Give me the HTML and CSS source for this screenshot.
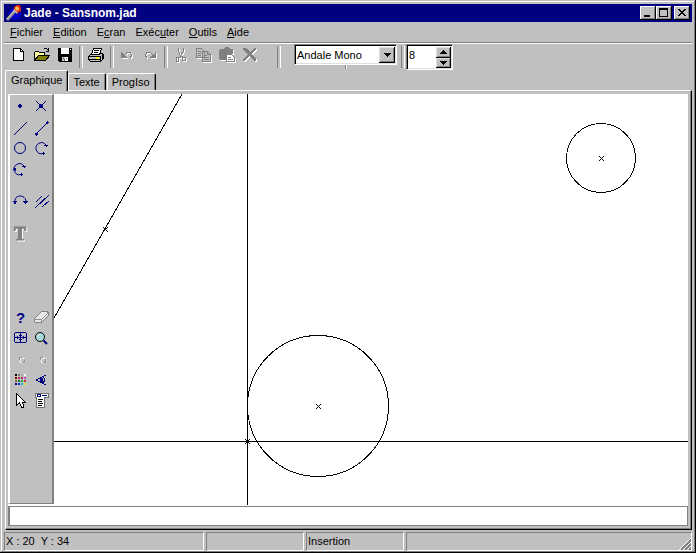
FILE: index.html
```html
<!DOCTYPE html>
<html lang="fr">
<head>
<meta charset="utf-8">
<title>Jade - Sansnom.jad</title>
<link rel="stylesheet" href="styles.css">
</head>
<body>
<div class="window">
  <header class="titlebar">
    <svg class="icon16 smooth" viewBox="0 0 16 16" aria-hidden="true">
      <circle cx="9" cy="9" r="6" fill="#0000c8"/>
      <path d="M1 15L9 6" stroke="#909090" stroke-width="3"/>
      <path d="M1 14L8 6" stroke="#d8d8d8" stroke-width="1"/>
      <path d="M7 5L11 9L13 6L9 3Z" fill="#c0c0c0"/>
      <path d="M8 2L11 0H14L15 3V6L12 8L8 4Z" fill="#e02800"/>
      <path d="M9 3L11 1L13 3L13 5L11 6L9 4Z" fill="#ffb060"/>
    </svg>
    <h1 class="title">Jade - Sansnom.jad</h1>
    <button class="winbtn" aria-label="Réduire"><svg viewBox="0 0 12 10"><path d="M2 7H8V9H2Z"/></svg></button>
    <button class="winbtn" aria-label="Agrandir"><svg viewBox="0 0 12 10"><path fill-rule="evenodd" d="M1 0H10V9H1ZM2 2V8H9V2Z"/></svg></button>
    <button class="winbtn winbtn-close" aria-label="Fermer"><svg viewBox="0 0 12 10"><path d="M2 1h2v1h1v1h2v-1h1v-1h2v1h-1v1h-1v1h-1v1h1v1h1v1h1v1h-2v-1h-1v-1h-2v1h-1v1h-2v-1h1v-1h1v-1h1v-1h-1v-1h-1v-1h-1z"/></svg></button>
  </header>

  <nav class="menubar">
    <a href="#"><u>F</u>ichier</a>
    <a href="#"><u>E</u>dition</a>
    <a href="#">E<u>c</u>ran</a>
    <a href="#">Exéc<u>u</u>ter</a>
    <a href="#"><u>O</u>utils</a>
    <a href="#"><u>A</u>ide</a>
  </nav>

  <div class="toolbar">
    <button class="tool" aria-label="Nouveau"><svg class="icon16" viewBox="0 0 16 16"><path d="M2.500 1.500H9.500L12.500 4.500V13.500H2.500Z" fill="#fff" stroke="#000"/><path d="M9.500 1.500V4.500H12.500" fill="none" stroke="#000"/></svg></button>
    <button class="tool" aria-label="Ouvrir"><svg class="icon16" viewBox="0 0 16 16"><path d="M0.500 13.500V5.500L1.500 4.500H4.500L5.500 5.500H10.500V8.500" fill="#ffff9c" stroke="#000"/><path d="M0.500 13.500L4.500 8.500H15.500L11.500 13.500Z" fill="#808000" stroke="#000"/><path d="M9.500 2.500L10.500 1.500H12.500L14.500 3.500M14.500 1V4M12 4.500H15" fill="none" stroke="#000"/></svg></button>
    <button class="tool" aria-label="Enregistrer"><svg class="icon16" viewBox="0 0 16 16"><path d="M1 1H15V15H2L1 14Z"/><path d="M4 1H12V7H4Z" fill="#fff"/><path d="M5 10H11V14H5Z" fill="#c0c0c0"/><path d="M8 10H11V14H8ZM13 2H14V3H13Z" fill="#fff"/><path d="M6 11H7V12H6ZM7 12H8V14H7ZM9 11H10V12H9Z" fill="#606060"/></svg></button>
    <span class="sep"></span>
    <button class="tool" aria-label="Imprimer"><svg class="icon16" viewBox="0 0 16 16"><path d="M1.500 8.500L4.500 6.500H14.500L15.500 8.500V11.500L12.500 14.500H2.500L0.500 12.500V9.500Z" fill="#c0c0c0" stroke="#000"/><path d="M3.500 7.500L5.500 1.500H13.500L11.500 7.500Z" fill="#fff" stroke="#000"/><path d="M6 3.500H11M6 5.500H10M1 9.500H12M1 12.500H12M12.500 9V14M14.500 8V12" stroke="#000"/><path d="M8 10H11V12H8Z" fill="#ffff00"/></svg></button>
    <span class="sep"></span>
    <button class="tool" aria-label="Annuler" disabled><svg class="icon16 embossed" viewBox="0 0 16 16"><path d="M2 5V11H8V10L6 9V8L8 6H11V7H12V9H11V11H12V10H13V7H12V5H7V6L5 8L3 6V5Z"/></svg></button>
    <button class="tool" aria-label="Rétablir" disabled><svg class="icon16 embossed" viewBox="0 0 16 16"><path d="M14 5V11H8V10L10 9V8L8 6H5V7H4V9H5V11H4V10H3V7H4V5H9V6L11 8L13 6V5Z"/></svg></button>
    <span class="sep"></span>
    <button class="tool" aria-label="Couper" disabled><svg class="icon16 embossed" viewBox="0 0 16 16"><path d="M5.500 1V4L7.500 9M10.500 1V4L7.500 9V10L5.500 11M8.500 9L10.500 11M3.500 10.500H5.500V14.500H3.500ZM9.500 10.500H12.500V13.500H9.500Z" class="line"/></svg></button>
    <button class="tool" aria-label="Copier" disabled><svg class="icon16 embossed" viewBox="0 0 16 16"><path d="M0.500 1.500H5.500L8.500 4.500V10.500H0.500ZM6.500 4.500H11.500L14.500 7.500V14.500H6.500Z" fill="#c0c0c0" stroke="#808080"/><path d="M2 4.500H5M2 6.500H5M2 8.500H5M8 8.500H11M8 10.500H13M8 12.500H13M11.500 5V7.500H14" class="line"/></svg></button>
    <button class="tool" aria-label="Coller" disabled><svg class="icon16 embossed" viewBox="0 0 16 16"><path d="M1 2H4L6 0H9L11 2H14V7H8V13H1L0 12V3Z"/><path d="M7.500 7.500H12.500L15.500 10.500V14.500H7.500Z" fill="#fff" stroke="#808080"/><path d="M9 10.500H12M9 12.500H14" class="line"/></svg></button>
    <button class="tool" aria-label="Supprimer" disabled><svg class="icon16 embossed" viewBox="0 0 16 16"><path d="M1 1H4L8 5L13 1H14V2L9 7L14 12V14H13L7 9L3 14H1V12L6 7L1 3Z"/></svg></button>
    <span class="sep sep-far"></span>
    <div class="combo">
      <select aria-label="Police"><option>Andale Mono</option></select>
      <span class="combo-arrow"><svg viewBox="0 0 7 4"><path d="M0 0H7V1H6V2H5V3H4V4H3V3H2V2H1V1H0Z"/></svg></span>
    </div>
    <span class="sep"></span>
    <div class="spin">
      <input type="number" value="8" aria-label="Taille">
      <div class="spin-buttons">
        <button aria-label="Augmenter"><svg viewBox="0 0 7 4"><path d="M0 4H7V3H6V2H5V1H4V0H3V1H2V2H1V3H0Z"/></svg></button>
        <button aria-label="Diminuer"><svg viewBox="0 0 7 4"><path d="M0 0H7V1H6V2H5V3H4V4H3V3H2V2H1V1H0Z"/></svg></button>
      </div>
    </div>
  </div>

  <div class="tabs" role="tablist">
    <button class="tab tab-active" role="tab" aria-selected="true">Graphique</button>
    <button class="tab" role="tab">Texte</button>
    <button class="tab" role="tab">ProgIso</button>
  </div>

  <main class="panel">
    <div class="work">
      <aside class="palette">
        <div class="group">
          <button aria-label="Point"><svg viewBox="0 0 17 17"><path d="M7 6h2v1h1v2h-1v1h-2v-1h-1v-2h1z" class="solid"/></svg></button>
          <button aria-label="Intersection"><svg viewBox="0 0 17 17"><path d="M3 3L13 13M13 3L3 13" class="navy"/><path d="M6 6h4v4h-4z" class="solid"/></svg></button>
          <button aria-label="Droite"><svg viewBox="0 0 17 17"><path d="M2 16L15 3" class="navy"/></svg></button>
          <button aria-label="Segment"><svg viewBox="0 0 17 17"><path d="M3 15L15 3" class="navy"/><path d="M2 14h2v-1h1v3h-1v1h-1v-1h-1zM13 3h1v-1h1v1h1v1h-1v1h-1v-1h-1z" class="solid"/></svg></button>
          <button aria-label="Cercle"><svg class="smooth" viewBox="0 0 17 17"><circle cx="8" cy="8" r="5.500" class="navy"/></svg></button>
          <button aria-label="Arc"><svg class="smooth" viewBox="0 0 17 17"><path d="M13 5A5.500 5.500 0 1 0 10 13.500" class="navy"/><path d="M11 5h4v1h-1v1h-1v-1h-2zM10 12h1v1h1v1h-1v1h-1z" class="solid"/></svg></button>
          <button aria-label="Arc par le centre"><svg class="smooth" viewBox="0 0 17 17"><path d="M12 5A5.500 5.500 0 1 0 9 13.500" class="navy"/><path d="M10 5h4v1h-1v1h-1v-1h-2zM9 12h1v1h1v1h-1v1h-1zM1 8h1v-1h2v3h-1v-1h-2z" class="solid"/></svg></button>
        </div>
        <div class="group">
          <button aria-label="Raccord"><svg class="smooth" viewBox="0 0 17 17"><path d="M3 9C2 1 14 1 14 9" class="navy"/><path d="M1 8h4v1h-1v2h-2v-2h-1zM11 8h5v1h-1v1h-1v1h-1v-1h-1v-1h-1z" class="solid"/></svg></button>
          <button aria-label="Parallèle"><svg viewBox="0 0 17 17"><path d="M2 15L16 2M3 9L9 3M9 14L16 8" class="navy"/></svg></button>
        </div>
        <div class="group">
          <button aria-label="Texte" disabled><svg class="smooth" viewBox="0 0 17 17"><text x="2" y="15" class="letter-t">T</text></svg></button>
        </div>
        <div class="group group-low">
          <button aria-label="Aide"><svg viewBox="0 0 17 17"><text x="4" y="14" class="letter-q">?</text></svg></button>
          <button aria-label="Gomme"><svg viewBox="0 0 17 17"><path d="M1.500 9.500L8.500 2.500H14.500L15.500 4.500V6.500L8.500 13.500H2.500L1.500 12.500Z" fill="#e8e8e8" stroke="#808080"/><path d="M2 10.500H8.500L15 4M8.500 11V13" fill="none" stroke="#909090"/></svg></button>
          <button aria-label="Cadrer"><svg viewBox="0 0 17 17"><path d="M3.500 2.500H13.500L14.500 3.500V11.500L13.500 12.500H3.500L2.500 11.500V3.500ZM8.500 3V12M3 7.500H14M5.500 6V9M11.500 6V9M7 5.500H10M7 9.500H10" class="navy"/></svg></button>
          <button aria-label="Zoom"><svg class="smooth" viewBox="0 0 17 17"><circle cx="7" cy="7" r="4.500" fill="#a8d8d8" stroke="#000"/><path d="M4.500 6.500L6.500 4.500" stroke="#fff"/><path d="M10.500 10.500L14 14" stroke="#000080" stroke-width="2"/></svg></button>
          <button aria-label="Précédent" disabled><svg class="smooth" viewBox="0 0 17 17"><circle cx="10.500" cy="9.500" r="2.500" fill="none" stroke="#fff"/><path d="M7.500 9V6.500H10M12.500 8V11.500H10" fill="none" stroke="#909090"/></svg></button>
          <button aria-label="Suivant" disabled><svg class="smooth" viewBox="0 0 17 17"><circle cx="10.500" cy="9.500" r="2.500" fill="none" stroke="#fff"/><path d="M7.500 9V6.500H10M12.500 8V11.500H10" fill="none" stroke="#909090"/></svg></button>
          <button aria-label="Couleurs"><svg viewBox="0 0 17 17">
            <path d="M3 2h2v2h-2z" fill="#000"/><path d="M6 2h2v2h-2z" fill="#808080"/><path d="M9 2h2v2h-2z" fill="#b0a8b0"/><path d="M12 2h2v2h-2z" fill="#fff"/>
            <path d="M3 5h2v2h-2z" fill="#800000"/><path d="M6 5h2v2h-2z" fill="#c02040"/><path d="M9 5h2v2h-2z" fill="#a03070"/><path d="M12 5h2v2h-2z" fill="#e040c0"/>
            <path d="M3 8h2v2h-2z" fill="#806020"/><path d="M6 8h2v2h-2z" fill="#008040"/><path d="M9 8h2v2h-2z" fill="#20a040"/><path d="M12 8h2v2h-2z" fill="#c03030"/>
            <path d="M3 11h2v2h-2z" fill="#000080"/><path d="M6 11h2v2h-2z" fill="#0020e0"/><path d="M9 11h2v2h-2z" fill="#20c0c0"/><path d="M12 11h2v2h-2z" fill="#f0e040"/></svg></button>
          <button aria-label="Voir"><svg viewBox="0 0 17 17"><path d="M13 3L3 8L13 13M10 5C12 7 12 9 10 11" class="navy"/><path d="M7 6H10V11H7Z" class="solid"/></svg></button>
          <button aria-label="Sélection"><svg viewBox="0 0 17 17"><path d="M4.500 0.500V12.500L7.500 9.500L9.500 14.500H11.500V12.500L10.500 9.500H13.500Z" fill="#fff" stroke="#000"/></svg></button>
          <button aria-label="Propriétés"><svg viewBox="0 0 17 17"><path d="M2.500 0.500H15.500V4.500H11.500V14.500H3.500V4.500H2.500Z" fill="#fff" stroke="#707070"/><path d="M4.500 1.500H7.500V3.500H4.500ZM9 2.500H14" fill="none" stroke="#000080"/><path d="M5 6.500H10M5 8.500H9M5 10.500H10M5 12.500H9" stroke="#000"/></svg></button>
        </div>
      </aside>
      <svg class="drawing" role="img" aria-label="Dessin">
        <defs>
          <g id="mark"><path d="M-2 -2h1v1h-1zM-1 -1h1v1h-1zM0 0h1v1h-1zM1 1h1v1h-1zM2 2h1v1h-1zM2 -2h1v1h-1zM1 -1h1v1h-1zM-1 1h1v1h-1zM-2 2h1v1h-1z" fill="#000" stroke="none"/></g>
        </defs>
        <line x1="193.500" y1="0" x2="193.500" y2="100%"/>
        <line x1="0" y1="347.500" x2="100%" y2="347.500"/>
        <line x1="128" y1="0" x2="0" y2="224"/>
        <circle cx="264" cy="312" r="70.500"/>
        <circle cx="547" cy="64" r="34.500"/>
        <use href="#mark" x="51" y="135"/>
        <use href="#mark" x="547" y="64"/>
        <use href="#mark" x="264" y="312"/>
        <use href="#mark" x="193" y="347"/>
      </svg>
    </div>
    <input class="command" type="text" aria-label="Commande">
  </main>

  <footer class="status">
    <span>X : 20&nbsp; Y : 34</span>
    <span></span>
    <span>Insertion</span>
    <span class="status-last"><svg class="grip" viewBox="0 0 12 12" aria-hidden="true"><path d="M0 12L12 0M4 12L12 4M8 12L12 8" stroke="#fff" fill="none"/><path d="M2 12L12 2M6 12L12 6M10 12L12 10" stroke="#808080" stroke-width="2" fill="none"/></svg></span>
  </footer>
</div>
</body>
</html>
```

FILE: styles.css
```css
* {
  box-sizing: border-box;
}

body {
  margin: 0;
  background: #c0c0c0;
  color: #000;
  font: 11px/13px "Liberation Sans", Arial, sans-serif;
}

button,
input,
select {
  margin: 0;
  padding: 0;
  border: 0;
  border-radius: 0;
  background: none;
  color: inherit;
  font: inherit;
}

svg {
  display: block;
  shape-rendering: crispEdges;
}

.smooth {
  shape-rendering: auto;
}

.window {
  display: flex;
  flex-direction: column;
  height: 100vh;
  padding: 4px 4px 3px;
  box-shadow: inset -1px -1px #000, inset 1px 1px #c0c0c0, inset -2px -2px #808080, inset 2px 2px #fff;
}

.icon16 {
  width: 16px;
  height: 16px;
}

/* Title bar */
.titlebar {
  display: flex;
  align-items: center;
  height: 18px;
  padding: 0 2px;
  background: #000080;
}

.title {
  flex: 1;
  margin: 0 0 0 2px;
  color: #fff;
  font-size: 12px;
  line-height: 18px;
  font-weight: bold;
}

.winbtn {
  display: grid;
  place-items: center;
  width: 16px;
  height: 14px;
  background: #c0c0c0;
  box-shadow: inset -1px -1px #000, inset 1px 1px #fff, inset -2px -2px #808080;
}

.winbtn svg {
  width: 12px;
  height: 10px;
}

.winbtn-close {
  margin-left: 2px;
}

/* Menu */
.menubar {
  display: flex;
  gap: 10px;
  height: 22px;
  padding: 4px 6px 0;
  border-bottom: 1px solid #fff;
  box-shadow: inset 0 -1px #808080;
}

.menubar a {
  color: inherit;
  text-decoration: none;
}

/* Toolbar */
.toolbar {
  display: flex;
  height: 26px;
  padding-left: 3px;
}

.tool {
  display: grid;
  place-items: center;
  width: 23px;
  height: 22px;
}

.embossed {
  fill: #808080;
  filter: drop-shadow(1px 1px 0 #fff);
}

.line {
  fill: none;
  stroke: #808080;
}

.sep {
  width: 8px;
  height: 22px;
  margin-top: 2px;
}

.sep::before {
  content: "";
  display: block;
  width: 2px;
  height: 100%;
  margin-left: 3px;
  border-left: 1px solid #808080;
  border-right: 1px solid #fff;
}

.sep-far {
  margin: 2px 12px 0 13px;
}

.combo,
.spin {
  display: flex;
  background: #fff;
  border: 1px solid;
  border-color: #808080 #fff #fff #808080;
  box-shadow: inset 1px 1px #000, inset -1px -1px #dfdfdf;
  padding: 2px 1px 1px;
}

.combo {
  position: relative;
  width: 103px;
  height: 21px;
}

.combo::after {
  content: "";
  position: absolute;
  top: 20px;
  left: 50px;
  height: 4px;
  border-left: 1px solid #808080;
  border-right: 1px solid #fff;
}

.combo select {
  appearance: none;
  flex: 1;
  min-width: 0;
  padding-left: 1px;
  outline: none;
}

.combo-arrow {
  display: grid;
  place-items: center;
  width: 16px;
  pointer-events: none;
}

.combo-arrow,
.spin button {
  background: #c0c0c0;
  box-shadow: inset -1px -1px #000, inset 1px 1px #dfdfdf, inset -2px -2px #808080;
}

.combo-arrow svg,
.spin svg {
  width: 7px;
  height: 4px;
}

.spin {
  width: 47px;
  height: 26px;
}

.combo + .sep {
  margin-left: 1px;
}

.spin input {
  appearance: textfield;
  flex: 1;
  min-width: 0;
  height: 16px;
  padding-left: 1px;
  outline: none;
}

.spin input::-webkit-inner-spin-button {
  appearance: none;
}

.spin-buttons {
  display: grid;
  width: 15px;
}

.spin button {
  display: grid;
  place-items: center;
}

/* Tabs */
.tabs {
  display: flex;
  align-items: flex-end;
  height: 20px;
  padding-left: 1px;
}

.tab {
  height: 17px;
  padding: 0 5px 0 4px;
  margin-right: 1px;
  background: #c0c0c0;
  border: 1px solid;
  border-color: #fff #000 transparent #fff;
  border-bottom: 0;
  border-radius: 2px 2px 0 0;
  box-shadow: inset -1px 0 #808080;
}

.tab-active {
  position: relative;
  height: 21px;
  margin: 0 0 -1px;
  padding: 0 5px 2px;
}

/* Notebook panel */
.panel {
  flex: 1;
  display: flex;
  flex-direction: column;
  min-height: 0;
  margin-left: 1px;
  padding: 3px 3px 3px 2px;
  border: 1px solid;
  border-color: #fff #000 #000 #fff;
  box-shadow: inset -1px -1px #808080;
}

.work {
  flex: 1;
  display: flex;
  min-height: 0;
  background: #fff;
}

.palette {
  flex: none;
  width: 46px;
  margin-bottom: 2px;
  padding-top: 1px;
  background: #c0c0c0;
  border: 2px solid;
  border-color: #fff #808080 #808080 #fff;
  border-width: 1px 2px 1px 2px;
  overflow: hidden;
}

.group {
  display: grid;
  grid-template-columns: 21px 21px;
  margin-bottom: 11px;
}

.group-low {
  margin-top: 63px;
}

.palette button {
  display: grid;
  place-items: center;
  width: 21px;
  height: 21px;
}

.palette svg {
  width: 17px;
  height: 17px;
  overflow: visible;
}

.navy {
  fill: none;
  stroke: #000080;
}

.solid {
  fill: #000080;
}

.letter-t {
  fill: #808080;
  stroke: #808080;
  font: bold 18px "Liberation Serif", serif;
  filter: drop-shadow(1px 1px 0 #fff);
}

.letter-q {
  fill: #000080;
  font: bold 15px "Liberation Sans", sans-serif;
}

.drawing {
  flex: 1;
  min-width: 0;
  height: 100%;
  padding-bottom: 1px;
  fill: none;
  stroke: #000;
}

.command {
  flex: none;
  height: 20px;
  padding: 0 3px;
  background: #fff;
  border: 1px solid #808080;
  border-left-width: 2px;
  border-left-style: double;
  outline: none;
}

/* Status bar */
.status {
  display: grid;
  grid-template-columns: 200px 98px 98px 1fr;
  gap: 2px;
  height: 20px;
  padding-top: 2px;
}

.status span {
  padding: 1px;
  line-height: 15px;
  border: 1px solid;
  border-color: #808080 #fff #fff #808080;
}

.status .status-last {
  display: flex;
  justify-content: flex-end;
  align-items: flex-end;
  padding: 0;
}

.grip {
  width: 12px;
  height: 12px;
}
```
